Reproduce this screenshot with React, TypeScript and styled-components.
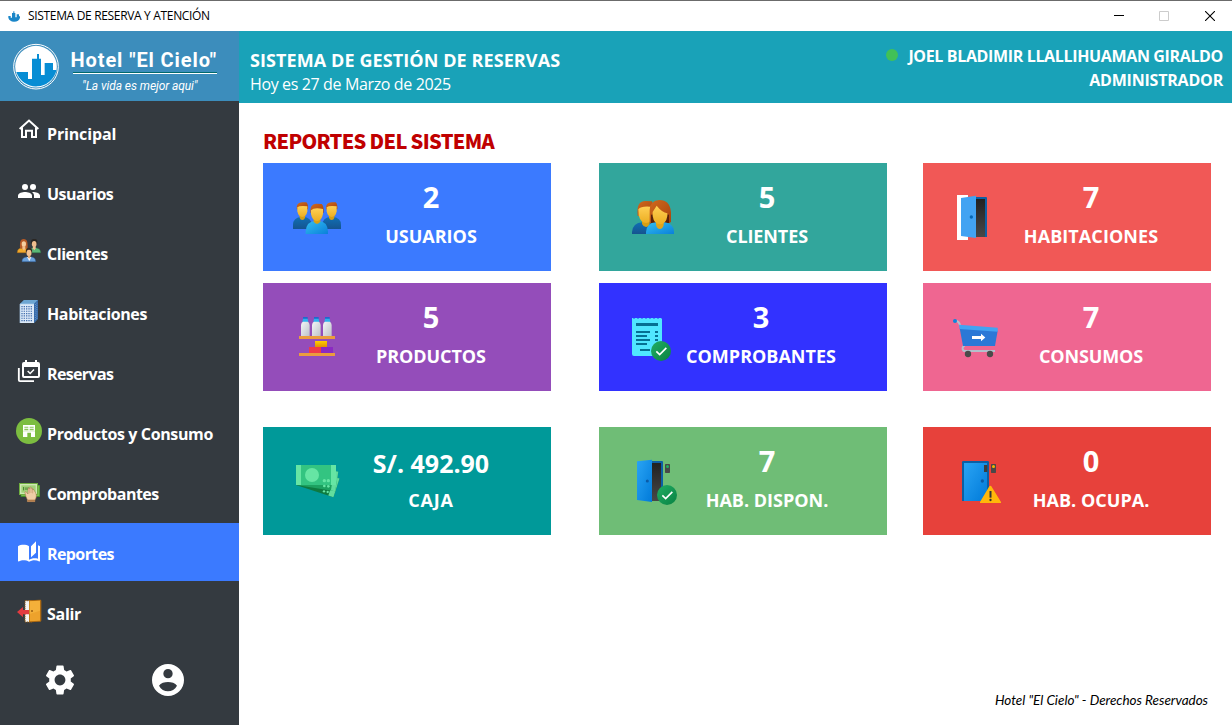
import React from 'react';
import styled, { createGlobalStyle } from 'styled-components';
import { MdSettings } from 'react-icons/md';

const GlobalStyle = createGlobalStyle`
  *, *::before, *::after { box-sizing: border-box; }
  body {
    margin: 0;
    background: #fff;
    font-family: 'Open Sans', 'Noto Sans', sans-serif;
    overflow: hidden;
  }
`;

/* ---------- Window frame ---------- */

const Window = styled.div`
  display: flex;
  flex-direction: column;
  width: 1232px;
  height: 725px;
  background: #fff;
`;

const TitleBar = styled.div`
  display: flex;
  align-items: center;
  height: 31px;
  padding-left: 8px;
  border-top: 1px solid #6b6b6b;
  background: #fff;
  color: #000;
`;

const TitleText = styled.span`
  flex: 1;
  margin-left: 7px;
  font-size: 12px;
  line-height: 16px;
  letter-spacing: -0.33px;
`;

const WindowButton = styled.span<{ $width: number; $color?: string }>`
  display: flex;
  justify-content: center;
  width: ${(p) => p.$width}px;
  color: ${(p) => p.$color ?? '#000'};
`;

const Columns = styled.div`
  display: flex;
  flex: 1;
  min-height: 0;
`;

/* ---------- Sidebar ---------- */

const Sidebar = styled.aside`
  display: flex;
  flex: none;
  flex-direction: column;
  width: 239px;
  background: #343a40;
  color: #fff;
`;

const Brand = styled.div`
  display: flex;
  height: 70px;
  margin-bottom: 2px;
  padding-left: 12px;
  background: #3c8dbc;
  font-family: Roboto, sans-serif;
`;

const BrandLogo = styled.svg`
  margin-top: 12px;
`;

const BrandText = styled.div`
  padding: 17px 0 0 10px;
`;

const BrandName = styled.div`
  margin-left: 0.5px;
  font-size: 20px;
  font-weight: 700;
  line-height: 24px;
  letter-spacing: 0.9px;
  white-space: nowrap;
`;

const BrandRule = styled.div`
  width: 144px;
  height: 2px;
  margin-left: 3px;
  border-top: 1px solid #00696b;
  background: #fff;
`;

const Slogan = styled.div`
  margin: 2px 0 0 12px;
  font-size: 12px;
  font-style: italic;
  line-height: 20px;
  letter-spacing: -0.08px;
  white-space: nowrap;
`;

const MenuItem = styled.a<{ $active?: boolean }>`
  display: flex;
  gap: 5px;
  height: 58px;
  margin-bottom: 2px;
  padding: 15px 0 0 16px;
  background: ${(p) => (p.$active ? '#3b7aff' : 'transparent')};
`;

const MenuLabel = styled.span<{ $spacing: number }>`
  margin-top: 3px;
  font-size: 16px;
  font-weight: 700;
  line-height: 26px;
  letter-spacing: ${(p) => p.$spacing}px;
  white-space: nowrap;
`;

const SidebarTools = styled.div`
  display: flex;
  align-items: center;
  height: 80px;
  padding-left: 42px;
  gap: 74px;
  margin-top: -3px;
`;

/* ---------- Header and content ---------- */

const Page = styled.main`
  display: flex;
  flex: 1;
  flex-direction: column;
  min-width: 0;
`;

const Header = styled.header`
  display: flex;
  justify-content: space-between;
  height: 72px;
  padding: 0 9px 0 11px;
  background: #19a2b8;
  color: #fff;
  line-height: 24px;
`;

const HeaderTitle = styled.div`
  padding-top: 17px;
`;

const SystemName = styled.div`
  font-size: 18px;
  font-weight: 700;
  letter-spacing: 0.09px;
`;

const Today = styled.div`
  font-size: 16px;
  letter-spacing: -0.37px;
`;

const Account = styled.div`
  display: flex;
  padding-top: 13px;
  font-size: 16px;
  font-weight: 700;
  text-align: right;
`;

const OnlineDot = styled.span`
  width: 12px;
  height: 12px;
  margin: 5px 10px 0 0;
  border-radius: 50%;
  background: #41c157;
`;

const AccountName = styled.div`
  letter-spacing: -0.35px;
`;

const AccountRole = styled.div`
  letter-spacing: -0.2px;
`;

const Content = styled.section`
  display: flex;
  flex: 1;
  flex-direction: column;
  padding: 24px 24px 15px;
`;

const Heading = styled.h1`
  margin: 0 0 8px;
  color: #c00000;
  font-family: 'Noto Sans CJK SC', sans-serif;
  font-size: 20px;
  font-weight: 900;
  line-height: 28px;
  letter-spacing: -0.68px;
`;

const CardGrid = styled.div`
  display: grid;
  grid-template-columns: 336px 324px 288px;
  row-gap: 12px;
  margin-bottom: 36px;
`;

const Card = styled.div<{ $bg: string }>`
  display: flex;
  width: 288px;
  height: 108px;
  padding-left: 30px;
  background: ${(p) => p.$bg};
  color: #fff;
`;

const CardArt = styled.svg`
  flex: none;
  margin-top: 30px;
`;

const CardBody = styled.div<{ $width?: number }>`
  width: ${(p) => p.$width ?? 180}px;
  padding-top: 14px;
  font-weight: 700;
  text-align: center;
  white-space: nowrap;
`;

const CardValue = styled.div<{ $money?: boolean }>`
  height: 45px;
  font-size: ${(p) => (p.$money ? 25 : 29)}px;
  line-height: ${(p) => (p.$money ? 45 : 40)}px;
`;

const CardLabel = styled.div<{ $spacing: number }>`
  font-size: 18px;
  line-height: 28px;
  letter-spacing: ${(p) => p.$spacing}px;
`;

const Footer = styled.footer`
  margin-top: auto;
  font-family: Lato, sans-serif;
  font-size: 13.5px;
  font-style: italic;
  line-height: 20px;
  letter-spacing: -0.02px;
  text-align: right;
  color: #000;
`;

/* ---------- Sidebar icons: 26px wide, three units per pixel ---------- */

const MenuArt = ({ y, children }: { y: number; children: React.ReactNode }) => (
  <svg width="26" height="26" viewBox={`48 ${y} 78 78`}>{children}</svg>
);

const HomeArt = () => (
  <MenuArt y={42}>
    <g fill="none" stroke="#fff" strokeWidth="6">
      <path d="M59 75L87 49.500L115 75" />
      <path d="M66 70V99H78V80H96V99H108V70" />
    </g>
  </MenuArt>
);

const UsersArt = () => (
  <MenuArt y={222}>
    <g fill="#fff">
      <circle cx="75" cy="249" r="9" />
      <circle cx="99" cy="249" r="9" />
      <path d="M54 282V274.500C54 267.500 68 264 75 264S96 267.500 96 274.500V282Z" />
      <path d="M99 264C98 264 97 264 96 264.200C99.500 266.700 102 270 102 274.500V282H120V274.500C120 267.500 106 264 99 264Z" />
    </g>
  </MenuArt>
);

const ClientsArt = () => (
  <MenuArt y={402}>
    <path d="M52 446C52 436 58 433 64 432H78C84 434 87 438 87 446Z" fill="#f0a92c" stroke="#b36f12" strokeWidth="1.500" />
    <path d="M88 446C88 437 92 433 98 432H110C118 434 122 438 122 446Z" fill="#5bb878" stroke="#2e7a48" strokeWidth="1.500" />
    <path d="M60 431C60 418 59 405 71 405S83 416 83 431L78 434H65Z" fill="#b65a26" />
    <ellipse cx="71.500" cy="420" rx="6.500" ry="8.500" fill="#f6cfa0" />
    <path d="M67 427H76V433L72 440L67 433Z" fill="#f3c08c" />
    <path d="M93 420C92 408 95 405 103 405S113 408 112 420Z" fill="#2b2622" />
    <ellipse cx="102.500" cy="420" rx="7" ry="9" fill="#efbd8d" />
    <path d="M99 427H107V433L103 439L98 433Z" fill="#f0c294" />
    <path d="M66 473C66 463 72 460 79 459H95C102 460 107 464 107 473Z" fill="#6ba2dc" stroke="#2f5f9a" strokeWidth="1.500" />
    <path d="M81 459H94L88 472Z" fill="#eef4fb" />
    <path d="M78 446C76 436 80 432 87 432S98 436 96 446Z" fill="#3a2a20" />
    <ellipse cx="87" cy="447" rx="7.500" ry="10" fill="#f2c191" />
    <path d="M84 455H91V460L87.500 464L84 460Z" fill="#e5ad79" />
  </MenuArt>
);

const BuildingArt = () => (
  <MenuArt y={42}>
    <path d="M60 60L72 48H114V104L102 117H60Z" fill="#4d87b8" />
    <path d="M60 60L72 48H114L102 60Z" fill="#6da6d2" />
    <path d="M102 60L114 48V104L102 117Z" fill="#3568a6" />
    <path d="M60 60H102V117H60Z" fill="#dce9f7" />
    <path d="M66 66V112M73 66V112M80 66V112M87 66V112M94 66V112" stroke="#426fae" strokeWidth="4" strokeDasharray="3.500 3.500" />
    <path d="M106 60V112M110.500 56V106" stroke="#83aede" strokeWidth="2" strokeDasharray="3 3.500" />
    <path d="M60 117V60H102" fill="none" stroke="#a9cbe8" strokeWidth="2" />
  </MenuArt>
);

const CalendarArt = () => (
  <MenuArt y={222}>
    <path d="M56.500 252V288Q56.500 291.500 60 291.500H102" fill="none" stroke="#fff" strokeWidth="5.500" />
    <path
      fill="#fff"
      fillRule="evenodd"
      d="M75 228H81V234H105V228H111V234H114Q120 234 120 240V276Q120 282 114 282H72Q66 282 66 276V240Q66 234 72 234H75ZM72 249V276H114V249Z"
    />
    <path d="M83 261L90.500 268.500L102 256.500" fill="none" stroke="#fff" strokeWidth="4.500" />
  </MenuArt>
);

const StoreArt = () => (
  <MenuArt y={402}>
    <circle cx="87" cy="441" r="39" fill="#7cbd40" />
    <path d="M69 423H105V459H93V446H82V459H69Z" fill="#fff" />
    <path d="M73 428H85V431H73ZM89 428H101V431H89ZM73 434H85V439H73ZM89 434H101V439H89Z" fill="#8dc65a" />
    <path d="M69 441.500H105" stroke="#b8dc97" strokeWidth="1.500" />
  </MenuArt>
);

const CashHandArt = () => (
  <MenuArt y={42}>
    <path d="M62 63H120V99H62Z" fill="#3f8f2b" />
    <path d="M64 65H118V96H64Z" fill="#7dbb4d" />
    <path d="M57 57H114V93H57Z" fill="#6fae3f" />
    <path d="M60 60H111V90H60Z" fill="#cfe8b4" />
    <path d="M64 64H107V86H64Z" fill="#a3d279" />
    <path d="M71 69V79M78 70V78M84 70V78" stroke="#3c7d2a" strokeWidth="3" />
    <path
      d="M75 87C74 83 77 81 80 85L84 90V75C84 71 88 71 88 75V72C88 68 93 68 93 72V74C94 70 98 71 98 75V78C99 75 103 76 103 80C105 84 109 88 109 95C109 101 107 105 105 108V113H82V107C79 101 76 94 75 87Z"
      fill="#efcda6"
      stroke="#9d6c42"
      strokeWidth="1.500"
    />
    <path d="M88 75V88M93 74V87M98 76V88" stroke="#b98a5e" strokeWidth="1.500" />
    <path d="M82 107H105V113H82Z" fill="#b17c4a" />
  </MenuArt>
);

const BookArt = () => (
  <MenuArt y={222}>
    <g transform="translate(51 229) scale(3)" fill="#fff">
      <path d="M19 1l-5 5v11l5-4.500V1zM1 6v14.650c0 .25.25.5.5.5.1 0 .15-.05.25-.05C3.100 20.450 5.050 20 6.500 20c1.950 0 4.050.4 5.500 1.500V6c-1.450-1.100-3.550-1.500-5.500-1.500S2.450 4.900 1 6zm22 13.500V6c-.6-.45-1.250-.75-2-1v13.500c-1.100-.35-2.300-.5-3.500-.5-1.700 0-4.150.65-5.500 1.500v2c1.350-.85 3.800-1.500 5.500-1.500 1.650 0 3.350.3 4.750 1.050.1.050.15.050.25.050.25 0 .5-.25.5-.5v-1z" />
    </g>
  </MenuArt>
);

const ExitArt = () => (
  <MenuArt y={402}>
    <path d="M75 410H96V474H75Z" fill="#f4f4f4" stroke="#8b5a1c" strokeWidth="3" strokeDasharray="4 2" />
    <path d="M87 409L121 407Q124 407 124 411V469Q124 473 121 473L87 475Z" fill="#ad6a12" />
    <path d="M89 412L120 410.500V470L89 471.500Z" fill="#eda22c" />
    <path d="M89 412L120 410.500V440L89 450Z" fill="#f4b03a" />
    <circle cx="96" cy="441" r="3" fill="#9a5d12" />
    <path d="M51 444L69 429V438H87V451H69V460Z" fill="#e23b40" />
  </MenuArt>
);

const ProfileArt = () => (
  <svg width="32" height="32" viewBox="0 0 96 96">
    <path
      fill="#fff"
      fillRule="evenodd"
      d="M48 0A48 48 0 1 1 48 96A48 48 0 1 1 48 0ZM48 15A14 14 0 1 0 48 43A14 14 0 1 0 48 15ZM48 54C38 54 26 57 21 65C27 76 37 82 48 82S69 76 75 65C70 57 58 54 48 54Z"
    />
  </svg>
);

/* ---------- Card icons: 48px square, three units per pixel ---------- */

const Art = ({ y = 99, children }: { y?: number; children: React.ReactNode }) => (
  <CardArt width="48" height="48" viewBox={`99 ${y} 144 144`}>{children}</CardArt>
);

const Swatches = styled.svg`
  display: block;
  width: 0;
  height: 0;
`;

const Gradients = () => (
  <Swatches>
    <defs>
      <linearGradient id="skin" x1="0" y1="0" x2="0" y2="1">
        <stop offset="0" stopColor="#ffcf54" />
        <stop offset="1" stopColor="#ecae22" />
      </linearGradient>
      <linearGradient id="hair" x1="0" y1="0" x2="1" y2="1">
        <stop offset="0" stopColor="#d0691e" />
        <stop offset="1" stopColor="#a8440c" />
      </linearGradient>
      <linearGradient id="shirt" x1="0" y1="0" x2="1" y2="1">
        <stop offset="0" stopColor="#33bef0" />
        <stop offset="1" stopColor="#0a80da" />
      </linearGradient>
      <linearGradient id="navy" x1="0" y1="0" x2="0" y2="1">
        <stop offset="0" stopColor="#106fb4" />
        <stop offset="1" stopColor="#15548f" />
      </linearGradient>
      <linearGradient id="bottle" x1="0" y1="0" x2="1" y2="1">
        <stop offset="0" stopColor="#f4f5f7" />
        <stop offset="1" stopColor="#bcc2c8" />
      </linearGradient>
      <linearGradient id="ok" x1="0" y1="0" x2="1" y2="1">
        <stop offset="0" stopColor="#21ad64" />
        <stop offset="1" stopColor="#088242" />
      </linearGradient>
      <linearGradient id="dark" x1="0" y1="0" x2="0" y2="1">
        <stop offset="0" stopColor="#212121" />
        <stop offset="1" stopColor="#484848" />
      </linearGradient>
      <linearGradient id="door" x1="0" y1="0" x2="1" y2="1">
        <stop offset="0" stopColor="#2aa4f4" />
        <stop offset="1" stopColor="#007ad9" />
      </linearGradient>
      <linearGradient id="gold" x1="0" y1="0" x2="0" y2="1">
        <stop offset="0" stopColor="#fed100" />
        <stop offset="1" stopColor="#e59000" />
      </linearGradient>
    </defs>
  </Swatches>
);

const BackPerson = ({ x }: { x: number }) => (
  <g>
    <path d={`M${x - 28} 207V195Q${x - 28} 172 ${x - 2} 171H${x + 2}Q${x + 28} 172 ${x + 28} 195V207Z`} fill="url(#navy)" />
    <path d={`M${x - 8} 162H${x + 8}V173Q${x + 6} 180 ${x} 180T${x - 8} 173Z`} fill="#d69f14" />
    <path d={`M${x - 17} 148Q${x - 19} 127 ${x} 127H${x + 12}Q${x + 18} 131 ${x + 17} 148Z`} fill="url(#hair)" />
    <path d={`M${x - 15} 142Q${x - 8} 136 ${x + 15} 139V154Q${x + 12} 171 ${x} 171T${x - 15} 154Z`} fill="url(#skin)" />
  </g>
);

const TeamArt = () => (
  <Art>
    <BackPerson x={127} />
    <BackPerson x={215} />
    <path d="M137 222V214Q139 184 166 182H176Q202 184 204 214V222Z" fill="url(#shirt)" />
    <path d="M161 173H181V184Q178 192 171 192T161 184Z" fill="#d69f14" />
    <path d="M151 158Q149 133 168 131L185 132Q192 137 191 158Z" fill="url(#hair)" />
    <path d="M153 151Q162 141 189 147V162Q185 183 171 183T153 162Z" fill="url(#skin)" />
  </Art>
);

const CoupleArt = () => (
  <Art>
    <path d="M108 222V216Q110 189 139 187H155Q178 189 178 214V222Z" fill="url(#navy)" />
    <path d="M138 180H161V192Q158 201 150 201T138 192Z" fill="#d69f14" />
    <path d="M125 168Q120 123 148 123L168 124L176 150V168Z" fill="url(#hair)" />
    <path d="M127 148Q136 136 172 141V166Q166 189 150 189T128 166Z" fill="url(#skin)" />
    <path d="M161 190V150Q162 121 190 120Q222 120 225 157V184Q224 190 217 190Z" fill="url(#hair)" />
    <path d="M165 189V164H219V189Z" fill="#5a210a" />
    <path d="M150 222V216Q152 189 180 187H206Q232 190 234 214V222Z" fill="url(#shirt)" />
    <path d="M180 181H203V195Q200 207 191.500 207T180 195Z" fill="#e0a41a" />
    <path d="M170 156L182 137Q198 157 214 160V168Q210 193 192 193T170 168Z" fill="url(#skin)" />
  </Art>
);

const OpenDoorArt = () => (
  <Art>
    <path d="M111 105H144V240H111Z" fill="#fff" />
    <path d="M166 111H198Q201 111 201 114V231H166Z" fill="#0c5fa5" />
    <path d="M166 117H195V231H166Z" fill="url(#dark)" />
    <path d="M123 114L168 107V234L123 228Z" fill="#42a3f2" />
    <circle cx="154" cy="171" r="5" fill="#0667b4" />
  </Art>
);

const Bottle = ({ x }: { x: number }) => (
  <g>
    <path d={`M${x - 7} 471H${x + 7}V478H${x - 7}Z`} fill="#1f69cc" />
    <path d={`M${x - 7} 476H${x + 7}L${x + 9} 486H${x - 9}Z`} fill="#2fb0ec" />
    <path d={`M${x - 13} 528V495Q${x - 12} 486 ${x - 7} 485H${x + 7}Q${x + 12} 486 ${x + 13} 495V528Z`} fill="url(#bottle)" />
  </g>
);

const ShelfArt = () => (
  <Art y={459}>
    <Bottle x={136} />
    <Bottle x={169} />
    <Bottle x={202} />
    <path d="M117 528H225V537H117ZM117 579H225V588H117Z" fill="#eb9c3d" />
    <path d="M165 543H201V561H165Z" fill="url(#gold)" />
    <path d="M147 561H183V579H147Z" fill="#ef3a49" />
    <path d="M183 561H219V579H183Z" fill="#8b2ac2" />
  </Art>
);

const CheckBadge = ({ x, y }: { x: number; y: number }) => (
  <g>
    <circle cx={x} cy={y} r="30" fill="url(#ok)" />
    <path d={`M${x - 14} ${y + 1}L${x - 4} ${y + 10.5}L${x + 16} ${y - 9.5}`} fill="none" stroke="#fff" strokeWidth="5" />
  </g>
);

const ReceiptArt = () => (
  <Art y={459}>
    <path
      d="M108 474H111L114 477L117 474H123L126 477L129 474H135L138 477L141 474H147L150 477L153 474H159L162 477L165 474H171L174 477L177 474H183L186 477L189 474H195L198 477V588H114Q108 588 108 582Z"
      fill="#50e6ff"
    />
    <path
      d="M120 489H186V498H120ZM120 513H162V519H120ZM177 513H186V519H177ZM120 525H153V531H120ZM177 525H186V531H177ZM120 537H162V543H120ZM177 537H186V543H177ZM120 549H153V555H120ZM132 567H162V573H132Z"
      fill="#057093"
    />
    <CheckBadge x={195} y={573} />
  </Art>
);

const CartArt = () => (
  <Art y={459}>
    <path d="M105 483Q118 482 120 497" fill="none" stroke="#b4bfcc" strokeWidth="6" />
    <path d="M134 556Q127 560 128 567Q129 573 136 573H225" fill="none" stroke="#b4bfcc" strokeWidth="6" />
    <path d="M119 505L233 512L225 558H129Z" fill="#2b78d6" />
    <path d="M117 494L233 503V515L119 507Z" fill="#42a3f2" />
    <circle cx="105" cy="483" r="6" fill="#0a86dc" />
    <circle cx="144" cy="582" r="9.500" fill="#4a4a4a" />
    <circle cx="210" cy="582" r="9.500" fill="#4a4a4a" />
    <path d="M156 528H183V521L196 532.500L183 544V537H156Z" fill="#fff" />
  </Art>
);

const CashArt = () => (
  <Art>
    <g transform="rotate(18 108 183)">
      <path d="M110 124H226V183H110Z" fill="#0e7a40" />
      <path d="M210 124H226V183H210Z" fill="#62dd9e" />
    </g>
    <g transform="rotate(9 108 183)">
      <path d="M109 124H227V183H109Z" fill="#1da160" />
      <path d="M214 124H227V183H214Z" fill="#62dd9e" />
    </g>
    <path d="M108 123H228V183H108Z" fill="#33c481" />
    <path d="M108 123H123V183H108ZM213 123H228V183H213Z" fill="#66e5a4" />
    <circle cx="156" cy="153" r="21" fill="#66e5a4" />
    <g fill="#66e5a4">
      <circle cx="193" cy="170" r="5" />
      <circle cx="205" cy="170" r="5" />
      <circle cx="193" cy="186" r="4" />
      <circle cx="205" cy="187" r="4" />
      <circle cx="192" cy="202" r="3.500" />
      <circle cx="203" cy="204" r="3.500" />
    </g>
  </Art>
);

const FreeRoomArt = () => (
  <Art>
    <path d="M166 111H198Q201 111 201 114V231H166Z" fill="#0c5fa5" />
    <path d="M166 117H195V231H166Z" fill="url(#dark)" />
    <path d="M123 112L168 107V234L123 228Z" fill="url(#door)" />
    <circle cx="154" cy="171" r="4.500" fill="#0b5ba6" />
    <rect x="207" y="120" width="15" height="27" rx="2" fill="#484848" />
    <circle cx="214.500" cy="127.500" r="4.500" fill="#1fb35f" />
    <CheckBadge x={213} y={213} />
  </Art>
);

const BusyRoomArt = () => (
  <Art>
    <path d="M126 231V115Q126 111 130 111H203Q207 111 207 115V231Z" fill="#0c5fa5" />
    <path d="M132 117H201V231H132Z" fill="url(#door)" />
    <circle cx="187" cy="171" r="5" fill="#0b5ba6" />
    <rect x="192" y="123" width="10" height="21" fill="#3c3c3c" />
    <rect x="213" y="120" width="15" height="27" rx="2" fill="#484848" />
    <circle cx="220.500" cy="127.500" r="4.500" fill="#f5b400" />
    <path d="M211 185Q213 185 214 187L243 234V237H180V234L208 187Q209 185 211 185Z" fill="#ffb70a" />
    <path d="M211.500 201V221" stroke="#343434" strokeWidth="6" />
    <circle cx="211.500" cy="228" r="3.500" fill="#343434" />
  </Art>
);

/* ---------- Data ---------- */

const menu = [
  { label: 'Principal', spacing: -0.15, Icon: HomeArt },
  { label: 'Usuarios', spacing: -0.5, Icon: UsersArt },
  { label: 'Clientes', spacing: -0.45, Icon: ClientsArt },
  { label: 'Habitaciones', spacing: -0.37, Icon: BuildingArt },
  { label: 'Reservas', spacing: -0.65, Icon: CalendarArt },
  { label: 'Productos y Consumo', spacing: -0.37, Icon: StoreArt },
  { label: 'Comprobantes', spacing: -0.5, Icon: CashHandArt },
  { label: 'Reportes', spacing: -0.6, Icon: BookArt, active: true },
  { label: 'Salir', spacing: -0.3, Icon: ExitArt },
];

type CardInfo = {
  label: string;
  value: string;
  bg: string;
  spacing: number;
  width?: number;
  money?: boolean;
  Icon: React.FC;
};

const totals: CardInfo[] = [
  { label: 'USUARIOS', value: '2', bg: '#3b7aff', spacing: 0, Icon: TeamArt },
  { label: 'CLIENTES', value: '5', bg: '#32a69c', spacing: -0.1, Icon: CoupleArt },
  { label: 'HABITACIONES', value: '7', bg: '#f15856', spacing: 0.08, Icon: OpenDoorArt },
  { label: 'PRODUCTOS', value: '5', bg: '#944dba', spacing: -0.08, Icon: ShelfArt },
  { label: 'COMPROBANTES', value: '3', bg: '#3232ff', spacing: 0, width: 168, Icon: ReceiptArt },
  { label: 'CONSUMOS', value: '7', bg: '#ef6691', spacing: -0.15, Icon: CartArt },
];

const status: CardInfo[] = [
  { label: 'CAJA', value: 'S/. 492.90', bg: '#009999', spacing: 0.8, money: true, Icon: CashArt },
  { label: 'HAB. DISPON.', value: '7', bg: '#6fbd76', spacing: 0, Icon: FreeRoomArt },
  { label: 'HAB. OCUPA.', value: '0', bg: '#e7413b', spacing: 0.03, Icon: BusyRoomArt },
];

const ReportCard = ({ label, value, bg, spacing, width, money, Icon }: CardInfo) => (
  <Card $bg={bg}>
    <Icon />
    <CardBody $width={width}>
      <CardValue $money={money}>{value}</CardValue>
      <CardLabel $spacing={spacing}>{label}</CardLabel>
    </CardBody>
  </Card>
);

export default function App() {
  return (
    <>
      <GlobalStyle />
      <Gradients />
      <Window>
        <TitleBar>
          <svg width="13" height="13" viewBox="27 27 39 39">
            <path d="M28 45H35V50H39V36H43V31H46V36H49V49H53V40H60V46H63V50Q60 62 45 62Q31 61 28 50Z" fill="#1a86c8" />
          </svg>
          <TitleText>SISTEMA DE RESERVA Y ATENCIÓN</TitleText>
          <WindowButton $width={42}>
            <svg width="10" height="10"><path d="M0 4.500H10" stroke="currentColor" /></svg>
          </WindowButton>
          <WindowButton $width={48} $color="#cccccc">
            <svg width="10" height="10"><path d="M.5 .5H9.500V9.500H.5Z" fill="none" stroke="currentColor" /></svg>
          </WindowButton>
          <WindowButton $width={44}>
            <svg width="10" height="10"><path d="M0 0L10 10M10 0L0 10" stroke="currentColor" strokeWidth="1.100" /></svg>
          </WindowButton>
        </TitleBar>
        <Columns>
          <Sidebar>
            <Brand>
              <BrandLogo width="48" height="48" viewBox="36 129 144 144">
                <circle cx="108" cy="200" r="67" fill="none" stroke="#fff" strokeWidth="3" />
                <circle cx="108" cy="200" r="62.500" fill="#fff" />
                <path
                  d="M49 216H84V237H96V176H111V162H117V176H123V225H134V189H159V210H169.500A62.500 62.500 0 0 1 49 216Z"
                  fill="#078dd4"
                />
              </BrandLogo>
              <BrandText>
                <BrandName>Hotel "El Cielo"</BrandName>
                <BrandRule />
                <Slogan>"La vida es mejor aqui"</Slogan>
              </BrandText>
            </Brand>
            {menu.map(({ label, spacing, Icon, active }) => (
              <MenuItem key={label} $active={active}>
                <Icon />
                <MenuLabel $spacing={spacing}>{label}</MenuLabel>
              </MenuItem>
            ))}
            <SidebarTools>
              <MdSettings size={36} />
              <ProfileArt />
            </SidebarTools>
          </Sidebar>
          <Page>
            <Header>
              <HeaderTitle>
                <SystemName>SISTEMA DE GESTIÓN DE RESERVAS</SystemName>
                <Today>Hoy es 27 de Marzo de 2025</Today>
              </HeaderTitle>
              <Account>
                <OnlineDot />
                <div>
                  <AccountName>JOEL BLADIMIR LLALLIHUAMAN GIRALDO</AccountName>
                  <AccountRole>ADMINISTRADOR</AccountRole>
                </div>
              </Account>
            </Header>
            <Content>
              <Heading>REPORTES DEL SISTEMA</Heading>
              <CardGrid>
                {totals.map((card) => (
                  <ReportCard key={card.label} {...card} />
                ))}
              </CardGrid>
              <CardGrid>
                {status.map((card) => (
                  <ReportCard key={card.label} {...card} />
                ))}
              </CardGrid>
              <Footer>Hotel "El Cielo" - Derechos Reservados</Footer>
            </Content>
          </Page>
        </Columns>
      </Window>
    </>
  );
}
